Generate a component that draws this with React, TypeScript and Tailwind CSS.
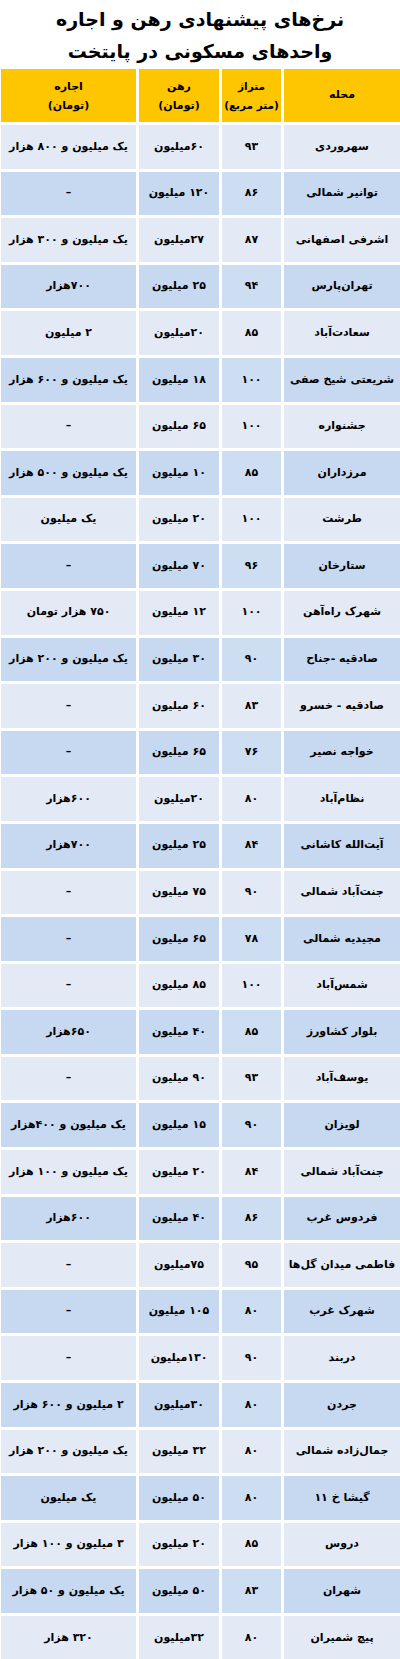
const rows: [string, string, string, string][] = [
  ["سهروردی", "۹۳", "۶۰میلیون", "یک میلیون و ۸۰۰ هزار"],
  ["توانیر شمالی", "۸۶", "۱۲۰ میلیون", "–"],
  ["اشرفی اصفهانی", "۸۷", "۲۷میلیون", "یک میلیون و ۳۰۰ هزار"],
  ["تهران‌پارس", "۹۴", "۲۵ میلیون", "۷۰۰هزار"],
  ["سعادت‌آباد", "۸۵", "۲۰میلیون", "۲ میلیون"],
  ["شریعتی شیخ صفی", "۱۰۰", "۱۸ میلیون", "یک میلیون و ۶۰۰ هزار"],
  ["جشنواره", "۱۰۰", "۶۵ میلیون", "–"],
  ["مرزداران", "۸۵", "۱۰ میلیون", "یک میلیون و ۵۰۰ هزار"],
  ["طرشت", "۱۰۰", "۲۰ میلیون", "یک میلیون"],
  ["ستارخان", "۹۶", "۷۰ میلیون", "–"],
  ["شهرک راه‌آهن", "۱۰۰", "۱۲ میلیون", "۷۵۰ هزار تومان"],
  ["صادقیه -جناح", "۹۰", "۳۰ میلیون", "یک میلیون و ۲۰۰ هزار"],
  ["صادقیه - خسرو", "۸۳", "۶۰ میلیون", "–"],
  ["خواجه نصیر", "۷۶", "۶۵ میلیون", "–"],
  ["نظام‌آباد", "۸۰", "۲۰میلیون", "۶۰۰هزار"],
  ["آیت‌الله کاشانی", "۸۴", "۲۵ میلیون", "۷۰۰هزار"],
  ["جنت‌آباد شمالی", "۹۰", "۷۵ میلیون", "–"],
  ["مجیدیه شمالی", "۷۸", "۶۵ میلیون", "–"],
  ["شمس‌آباد", "۱۰۰", "۸۵ میلیون", "–"],
  ["بلوار کشاورز", "۸۵", "۴۰ میلیون", "۶۵۰هزار"],
  ["یوسف‌آباد", "۹۳", "۹۰ میلیون", "–"],
  ["لویزان", "۹۰", "۱۵ میلیون", "یک میلیون و ۴۰۰هزار"],
  ["جنت‌آباد شمالی", "۸۴", "۲۰ میلیون", "یک میلیون و ۱۰۰ هزار"],
  ["فردوس غرب", "۸۶", "۴۰ میلیون", "۶۰۰هزار"],
  ["فاطمی میدان گل‌ها", "۹۵", "۷۵میلیون", "–"],
  ["شهرک غرب", "۸۰", "۱۰۵ میلیون", "–"],
  ["دربند", "۹۰", "۱۳۰میلیون", "–"],
  ["جردن", "۸۰", "۳۰میلیون", "۲ میلیون و ۶۰۰ هزار"],
  ["جمال‌زاده شمالی", "۸۰", "۳۲ میلیون", "یک میلیون و ۲۰۰ هزار"],
  ["گیشا خ ۱۱", "۸۰", "۵۰ میلیون", "یک میلیون"],
  ["دروس", "۸۵", "۲۰ میلیون", "۳ میلیون و ۱۰۰ هزار"],
  ["شهران", "۸۳", "۵۰ میلیون", "یک میلیون و ۵۰ هزار"],
  ["پیچ شمیران", "۸۰", "۳۲میلیون", "۳۲۰ هزار"],
];

const font = { fontFamily: '"DejaVu Sans", "Noto Sans", sans-serif' };

export default function App() {
  return (
    <div dir="rtl" className="w-[400px] bg-white text-black font-bold" style={font}>
      <div className="h-[69px] flex flex-col items-center justify-center text-[19px] leading-[32px]">
        <p>نرخ‌های پیشنهادی رهن و اجاره</p>
        <p>واحدهای مسکونی در پایتخت</p>
      </div>
      <div className="grid grid-cols-[116px_59px_80px_135px] gap-[3px] text-[11px] whitespace-nowrap">
        <div className="h-[53px] bg-[#fdc600] flex items-center justify-center">محله</div>
        <div className="h-[53px] bg-[#fdc600] flex flex-col items-center justify-center leading-[19px] text-[10.5px]">
          <span>متراژ</span>
          <span>(متر مربع)</span>
        </div>
        <div className="h-[53px] bg-[#fdc600] flex flex-col items-center justify-center leading-[19px]">
          <span>رهن</span>
          <span>(تومان)</span>
        </div>
        <div className="h-[53px] bg-[#fdc600] flex flex-col items-center justify-center leading-[19px]">
          <span>اجاره</span>
          <span>(تومان)</span>
        </div>
        {rows.map((r, i) => {
          const dark = i % 2 === 1;
          return [
            <div key={i + "a"} className={`h-[43.6px] flex items-center justify-center ${dark ? "bg-[#c6d9f0]" : "bg-[#e3eaf6]"}`}>{r[0]}</div>,
            <div key={i + "b"} className={`h-[43.6px] flex items-center justify-center ${dark ? "bg-[#cddef2]" : "bg-[#e3eaf6]"}`}>{r[1]}</div>,
            <div key={i + "c"} className={`h-[43.6px] flex items-center justify-center ${dark ? "bg-[#c6d9f0]" : "bg-[#e3eaf6]"}`}>{r[2]}</div>,
            <div key={i + "d"} className={`h-[43.6px] flex items-center justify-center ${dark ? "bg-[#c6d9f0]" : "bg-[#e3eaf6]"}`}>{r[3]}</div>,
          ];
        })}
      </div>
    </div>
  );
}
